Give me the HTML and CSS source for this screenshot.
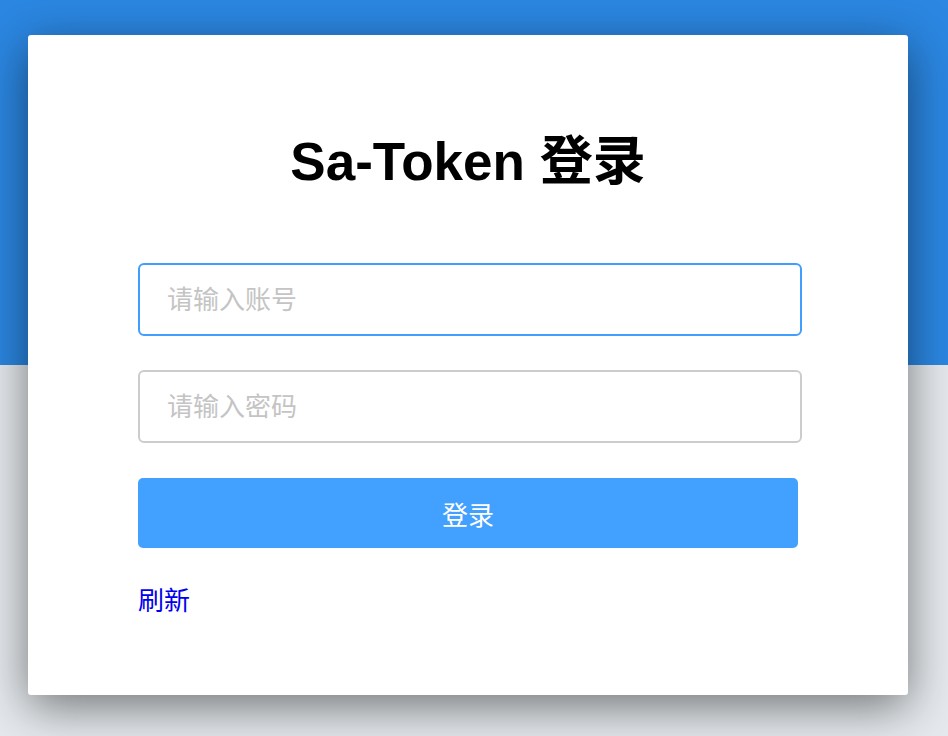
FILE: index.html
```html
<!DOCTYPE html>
<html lang="zh-CN">
<head>
<meta charset="utf-8">
<title>Sa-Token 登录</title>
<link rel="stylesheet" href="styles.css">
</head>
<body>
<div class="page">
  <div class="band"></div>
  <div class="card">
    <h1 class="title">Sa-Token 登录</h1>
    <div class="field"><input class="input focused" type="text" placeholder="请输入账号"></div>
    <div class="field"><input class="input" type="password" placeholder="请输入密码"></div>
    <button class="btn">登录</button>
    <a class="link" href="#">刷新</a>
  </div>
</div>
</body>
</html>
```

FILE: styles.css
```css
* { box-sizing: border-box; }
html, body { margin: 0; padding: 0; }
body {
  width: 948px;
  height: 736px;
  overflow: hidden;
  background: #e6eaee;
  font-family: "Liberation Sans", "Noto Sans CJK SC", sans-serif;
}
.page {
  position: relative;
  width: 948px;
  height: 736px;
  padding: 35px 40px 0 28px;
}
.band {
  position: absolute;
  left: 0; top: 0;
  width: 948px;
  height: 365px;
  background: #2b87e2;
}
.card {
  position: relative;
  width: 880px;
  height: 660px;
  background: #fff;
  border-radius: 3px;
  box-shadow: 0 12px 48px rgba(0,0,0,0.5);
  padding: 92px 110px 0 110px;
  display: flex;
  flex-direction: column;
  align-items: flex-start;
}
.title {
  align-self: stretch;
  margin: 0 0 66px 0;
  text-align: center;
  font-size: 53px;
  font-weight: bold;
  line-height: 70px;
  color: #000;
}
.field { margin-bottom: 34px; }
.input {
  display: block;
  width: 664px;
  height: 73px;
  border: 2px solid #cccccc;
  border-radius: 6px;
  padding: 2px 27px 0;
  font-size: 26px;
  font-family: "Liberation Sans", "Noto Sans CJK SC", sans-serif;
  color: #333;
  background: #fff;
  outline: none;
}
.input.focused { border-color: #409eff; }
.input::placeholder { color: #c4c4c4; }
.btn {
  width: 660px;
  height: 70px;
  margin-top: 1px;
  border: none;
  border-radius: 5px;
  background: #42a0ff;
  color: #fff;
  font-size: 26px;
  font-family: "Liberation Sans", "Noto Sans CJK SC", sans-serif;
}
.link {
  margin-top: 36px;
  font-size: 26px;
  line-height: 34px;
  color: #0000ee;
  text-decoration: none;
}
```
